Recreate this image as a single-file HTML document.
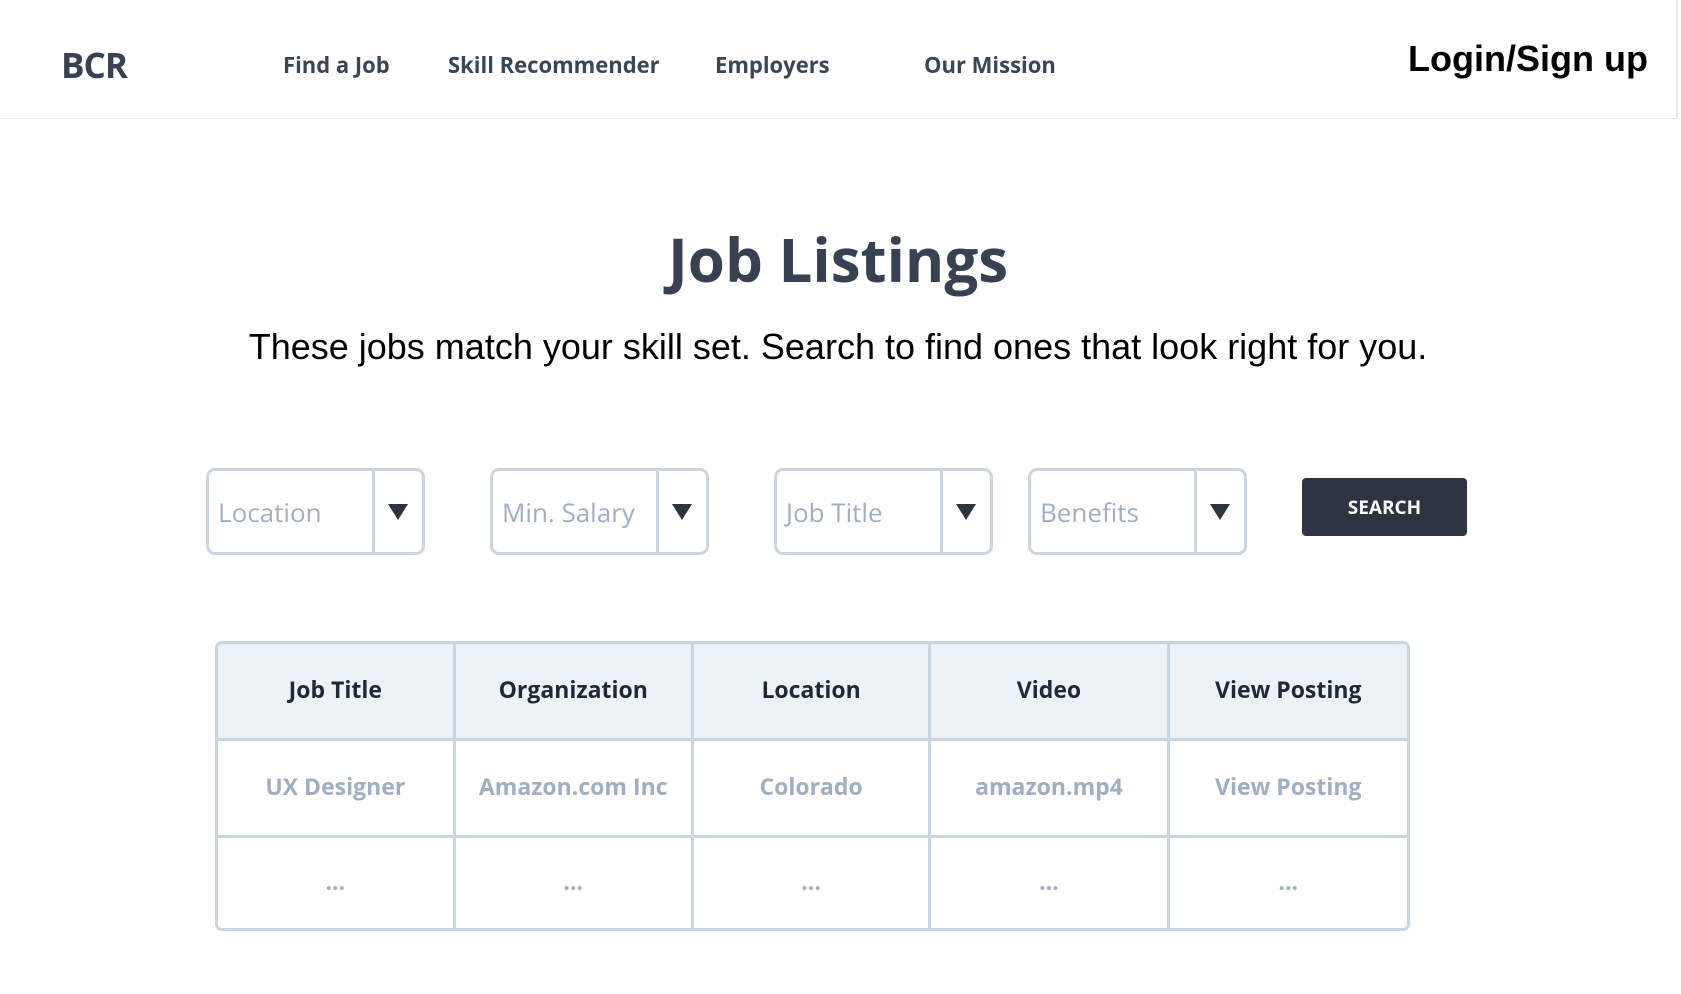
<!DOCTYPE html>
<html><head><meta charset="utf-8"><style>
*{margin:0;padding:0;box-sizing:border-box}
body{width:1681px;height:994px;background:#fff;position:relative;overflow:hidden;font-family:"Open Sans","Liberation Sans",sans-serif}
.nav{position:absolute;left:0;top:0;width:1678px;height:119px;border-bottom:1px solid #e5e7eb;border-right:2px solid #e5e7eb}
.abs{position:absolute;white-space:nowrap}
.logo{left:61px;top:42px;font-size:35px;font-weight:bold;color:#374151;letter-spacing:-1px}
.link{top:50px;font-size:22px;font-weight:bold;color:#3a4556}
.login{left:1408px;top:38px;font-family:"Liberation Sans",Arial,sans-serif;font-size:36px;font-weight:bold;color:#000}
h1{position:absolute;left:0;width:1676px;text-align:center;top:218px;font-size:60px;font-weight:bold;color:#374151}
.sub{position:absolute;left:0;width:1676px;text-align:center;top:326px;font-family:"Liberation Sans",Arial,sans-serif;font-size:36px;color:#000}
.sel{position:absolute;top:468px;width:219px;height:87px;border:3px solid #cbd5e0;border-radius:9px}
.sel span{position:absolute;left:9px;top:23px;font-size:26px;color:#a0aec0}
.sel i{position:absolute;left:163px;top:0;width:3px;height:100%;background:#cbd5e0}
.sel b{position:absolute;left:179px;top:33px;width:0;height:0;border-left:10px solid transparent;border-right:10px solid transparent;border-top:16px solid #2d3440}
.btn{position:absolute;left:1302px;top:478px;width:165px;height:58px;background:#2d3440;border-radius:4px;color:#fff;font-weight:bold;font-size:19px;text-align:center;line-height:58px}
table{position:absolute;left:215px;top:641px;width:1195px;height:290px;border-collapse:separate;border-spacing:0;border:3px solid #cbd5e0;border-radius:7px;overflow:hidden}
td{border-right:3px solid #cbd5e0;border-bottom:3px solid #cbd5e0;text-align:center;font-weight:bold;font-size:23px;color:#a0aec0;width:239px;padding-bottom:4px}
td:last-child{border-right:none}
tr:last-child td{border-bottom:none}
tr.h td{background:#edf2f7;color:#1f2937}
</style></head><body>
<div class="nav"></div>
<div class="abs logo">BCR</div>
<div class="abs link" style="left:283px">Find a Job</div>
<div class="abs link" style="left:448px">Skill Recommender</div>
<div class="abs link" style="left:715px">Employers</div>
<div class="abs link" style="left:924px">Our Mission</div>
<div class="abs login">Login/Sign up</div>
<h1>Job Listings</h1>
<div class="sub">These jobs match your skill set. Search to find ones that look right for you.</div>
<div class="sel" style="left:206px"><span>Location</span><i></i><b></b></div>
<div class="sel" style="left:490px"><span>Min. Salary</span><i></i><b></b></div>
<div class="sel" style="left:774px"><span>Job Title</span><i></i><b></b></div>
<div class="sel" style="left:1028px"><span>Benefits</span><i></i><b></b></div>
<div class="btn">SEARCH</div>
<table>
<tr class="h"><td>Job Title</td><td>Organization</td><td>Location</td><td>Video</td><td>View Posting</td></tr>
<tr><td>UX Designer</td><td>Amazon.com Inc</td><td>Colorado</td><td>amazon.mp4</td><td>View Posting</td></tr>
<tr><td>...</td><td>...</td><td>...</td><td>...</td><td>...</td></tr>
</table>
</body></html>
